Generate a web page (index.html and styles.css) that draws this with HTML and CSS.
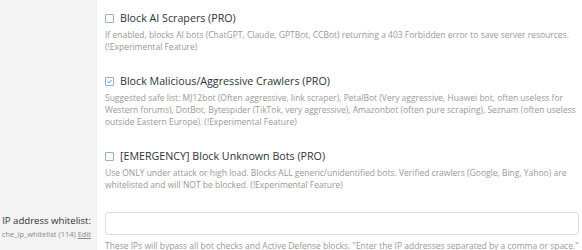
FILE: index.html
```html
<!DOCTYPE html>
<html>
<head>
<meta charset="utf-8">
<link rel="stylesheet" href="styles.css">
</head>
<body>
<div class="page">
  <div class="side">
    <div class="side-spacer"></div>
    <div class="field-label">
      <div class="field-title">IP address whitelist:</div>
      <div class="field-meta">che_ip_whitelist (114) <span class="edit">Edit</span></div>
    </div>
  </div>
  <div class="main">
    <div class="option">
      <label class="opt-label"><span class="cb"></span>Block AI Scrapers (PRO)</label>
      <p class="desc">If enabled, blocks AI bots (ChatGPT, Claude, GPTBot, CCBot) returning a 403 Forbidden error to save server resources.<br>(!Experimental Feature)</p>
    </div>
    <div class="option">
      <label class="opt-label"><span class="cb checked"><svg viewBox="0 0 10 10" class="tick"><path d="M2.2 5.2 L4.2 7.1 L7.9 2.9" fill="none" stroke="#3b8fd1" stroke-width="1.3"/></svg></span>Block Malicious/Aggressive Crawlers (PRO)</label>
      <p class="desc">Suggested safe list: MJ12bot (Often aggressive, link scraper), PetalBot (Very aggressive, Huawei bot, often useless for<br>Western forums), DotBot, Bytespider (TikTok, very aggressive), Amazonbot (often pure scraping), Seznam (often useless<br>outside Eastern Europe). (!Experimental Feature)</p>
    </div>
    <div class="option">
      <label class="opt-label"><span class="cb"></span>[EMERGENCY] Block Unknown Bots (PRO)</label>
      <p class="desc">Use ONLY under attack or high load. Blocks ALL generic/unidentified bots. Verified crawlers (Google, Bing, Yahoo) are<br>whitelisted and will NOT be blocked. (!Experimental Feature)</p>
    </div>
    <div class="input-row">
      <div class="text-input"></div>
      <p class="desc hint">These IPs will bypass all bot checks and Active Defense blocks. "Enter the IP addresses separated by a comma or space."</p>
    </div>
  </div>
</div>
</body>
</html>
```
FILE: styles.css
```css
html, body {
  margin: 0;
  padding: 0;
  background: #ffffff;
  overflow: hidden;
}
.page {
  display: flex;
  width: 582px;
  height: 250px;
  font-family: "Open Sans", "Noto Sans", sans-serif;
}
.side {
  width: 97px;
  flex: none;
  background: #f3f3f3;
  display: flex;
  flex-direction: column;
}
.side-spacer {
  height: 213px;
}
.field-label {
  display: flex;
  flex-direction: column;
  align-items: flex-end;
  padding-right: 6px;
}
.field-title {
  white-space: nowrap;
  font-size: 9.6px;
  line-height: 15px;
  color: #2c3338;
}
.field-meta {
  white-space: nowrap;
  font-size: 7.5px;
  line-height: 10px;
  margin-top: 1px;
  color: #8a8a8a;
}
.edit {
  text-decoration: underline;
}
.main {
  flex: 1;
  padding: 10px 5px 0 8px;
  display: flex;
  flex-direction: column;
}
.option {
  margin-bottom: 20px;
}
.opt-label {
  display: flex;
  align-items: center;
  height: 16px;
  font-size: 10.7px;
  color: #2c3338;
  white-space: nowrap;
}
.cb {
  width: 7px;
  height: 7px;
  border: 1px solid #8fb3c9;
  border-radius: 1px;
  background: #fbfdff;
  margin-right: 6px;
  flex: none;
  display: flex;
  align-items: center;
  justify-content: center;
}
.tick {
  width: 9px;
  height: 9px;
}
.desc {
  margin: 3px 0 0 0;
  font-size: 8.5px;
  line-height: 12px;
  color: #999999;
  white-space: nowrap;
}
.input-row {
  margin-top: 1px;
}
.text-input {
  height: 21px;
  border: 1px solid #dcdcdc;
  border-radius: 3px;
  background: #fff;
}
.hint {
  margin-top: 5px;
}
```
